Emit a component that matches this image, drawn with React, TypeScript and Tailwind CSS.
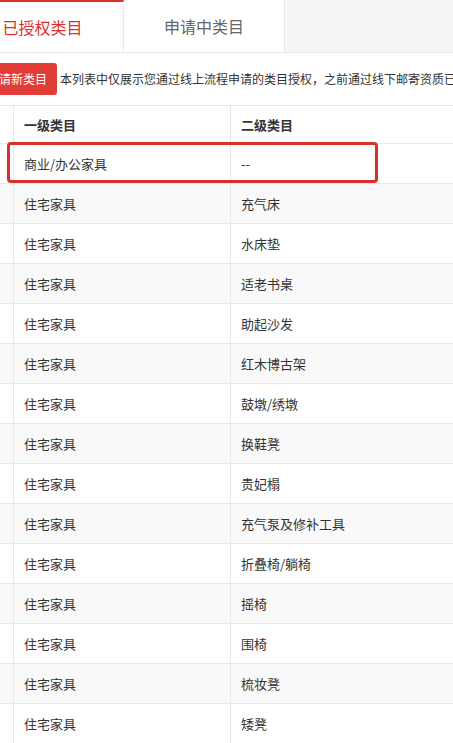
import React from "react";

const rows: [string, string][] = [
  ["商业/办公家具", "--"],
  ["住宅家具", "充气床"],
  ["住宅家具", "水床垫"],
  ["住宅家具", "适老书桌"],
  ["住宅家具", "助起沙发"],
  ["住宅家具", "红木博古架"],
  ["住宅家具", "鼓墩/绣墩"],
  ["住宅家具", "换鞋凳"],
  ["住宅家具", "贵妃榻"],
  ["住宅家具", "充气泵及修补工具"],
  ["住宅家具", "折叠椅/躺椅"],
  ["住宅家具", "摇椅"],
  ["住宅家具", "围椅"],
  ["住宅家具", "梳妆凳"],
  ["住宅家具", "矮凳"],
];

export default function App() {
  return (
    <div
      className="w-[453px] h-[743px] overflow-hidden bg-white text-[#333]"
      style={{ fontFamily: '"Noto Sans CJK SC", "Noto Sans", sans-serif' }}
    >
      <div className="ml-[-38px] w-[600px]">
        {/* Tabs */}
        <div className="flex h-[53px] bg-[#f5f5f5] border-b border-[#e8e8e8]">
          <div className="w-[162px] bg-white border-t-2 border-[#d9302c] border-r border-r-[#e8e8e8] flex items-center justify-center text-[16px] text-[#d9302c] pb-[1px]">
            已授权类目
          </div>
          <div className="w-[161px] bg-white border-r border-[#e8e8e8] flex items-center justify-center text-[16px] text-[#666]">
            申请中类目
          </div>
        </div>

        {/* Action row */}
        <div className="flex items-center pt-[10px] ml-[15px]">
          <div className="h-[32px] w-[80px] flex items-center justify-center bg-[#e23c38] text-white text-[12px] rounded-[3px] shrink-0">
            申请新类目
          </div>
          <div className="ml-[3px] text-[12px] text-[#333] whitespace-nowrap">
            本列表中仅展示您通过线上流程申请的类目授权，之前通过线下邮寄资质已经获得的类目授权请查看
          </div>
        </div>

        {/* Table */}
        <div className="relative mt-[10px] ml-[15px] border-t border-[#e8e8e8]">
          <div className="flex h-[38px] border-b border-[#e8e8e8] text-[13px] font-semibold">
            <div className="w-[37px] border-r border-[#e8e8e8]" />
            <div className="w-[217px] border-r border-[#e8e8e8] pl-[10px] flex items-center">
              一级类目
            </div>
            <div className="flex-1 pl-[10px] flex items-center">二级类目</div>
          </div>
          {rows.map(([a, b], i) => (
            <div
              key={i}
              className={
                "flex h-[40px] border-b border-[#e8e8e8] text-[13px] " +
                (i % 2 === 1 ? "bg-[#f9f9f9]" : "bg-white")
              }
            >
              <div className="w-[37px] border-r border-[#e8e8e8]" />
              <div className="w-[217px] border-r border-[#e8e8e8] pl-[10px] flex items-center">
                {a}
              </div>
              <div className="flex-1 pl-[10px] flex items-center">{b}</div>
            </div>
          ))}
          <div className="absolute left-[30px] top-[36px] w-[371px] h-[41px] border-[3px] border-[#d8302c] rounded-[4px]" />
        </div>
      </div>
    </div>
  );
}
